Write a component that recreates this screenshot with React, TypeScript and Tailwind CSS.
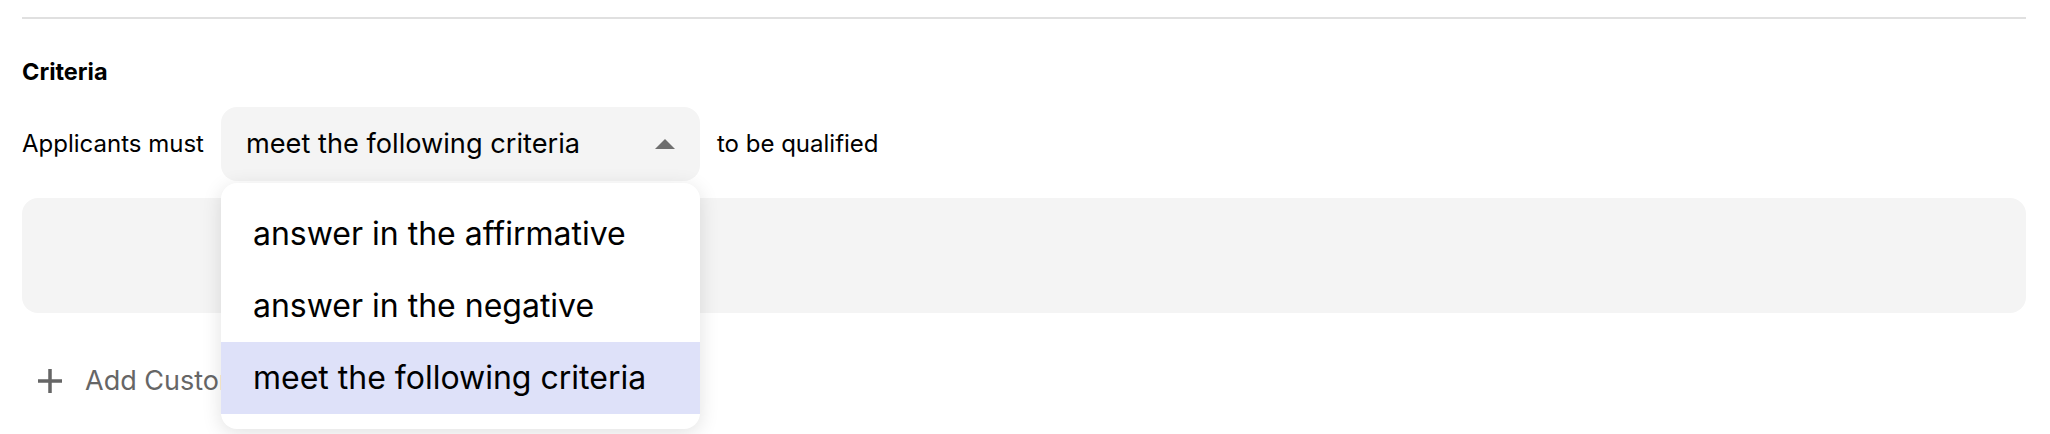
import { useState } from 'react'

const OPTIONS = [
  'answer in the affirmative',
  'answer in the negative',
  'meet the following criteria',
]

function CaretUp() {
  return (
    <svg width="20" height="10" viewBox="0 0 20 10" aria-hidden>
      <polygon points="10,0 20,10 0,10" fill="#6f6f6f" />
    </svg>
  )
}

function PlusIcon() {
  return (
    <svg width="24" height="24" viewBox="0 0 24 24" aria-hidden>
      <path d="M12 0v24M0 12h24" stroke="#666666" strokeWidth="3.5" fill="none" />
    </svg>
  )
}

export default function App() {
  const [selected, setSelected] = useState(OPTIONS[2])

  return (
    <div
      className="min-h-[434px] bg-white pl-[22px] pr-[24px] pt-[17px] text-black"
      style={{ fontFamily: 'Inter, "Noto Sans", sans-serif' }}
    >
      {/* divider */}
      <div className="h-[2px] bg-[#e0e0e0]" />

      <h2 className="mt-[36px] text-[23.5px] leading-[33px] font-bold">Criteria</h2>

      {/* sentence row with select */}
      <div className="mt-[19px] flex items-center gap-[17px]">
        <span className="text-[24px] leading-[36px]">Applicants must</span>

        <div className="relative">
          <button className="flex h-[74px] w-[479px] items-center justify-between rounded-[16px] bg-[#f4f4f4] pl-[25px] pr-[25px] text-[27.2px]">
            <span>{selected}</span>
            <CaretUp />
          </button>

          {/* open menu */}
          <ul className="absolute left-0 top-[76px] z-10 w-[479px] rounded-[16px] bg-white py-[15px] shadow-[0_4px_20px_rgba(0,0,0,0.12)]">
            {OPTIONS.map((opt) => (
              <li
                key={opt}
                onClick={() => setSelected(opt)}
                className={
                  'flex h-[72px] items-center pl-[32px] text-[32px] ' +
                  (opt === selected ? 'bg-[#dee1f9]' : '')
                }
              >
                {opt}
              </li>
            ))}
          </ul>
        </div>

        <span className="text-[24px] leading-[36px]">to be qualified</span>
      </div>

      {/* empty criteria panel */}
      <div className="mt-[17px] h-[115px] rounded-[16px] bg-[#f4f4f4]" />

      <div className="ml-[16px] mt-[40px] flex h-[56px] items-center gap-[23px]">
        <PlusIcon />
        <span className="text-[27px] text-[#666666]">Add Custom Criteria</span>
      </div>
    </div>
  )
}
